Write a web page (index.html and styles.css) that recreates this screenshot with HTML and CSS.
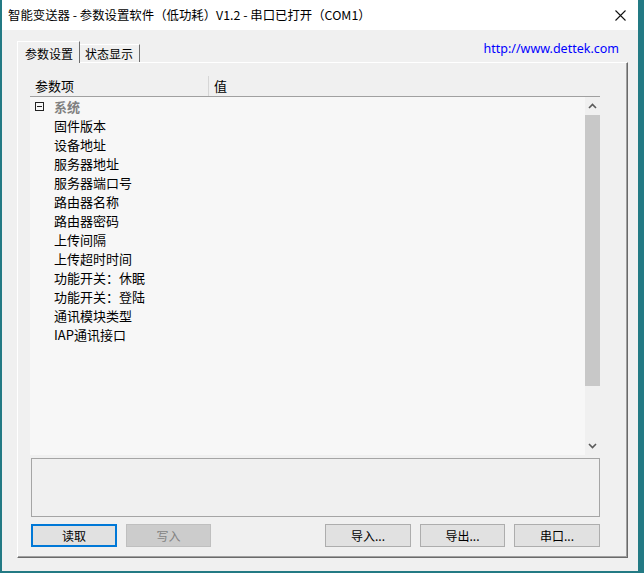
FILE: index.html
```html
<!DOCTYPE html>
<html lang="zh-CN">
<head>
<meta charset="utf-8">
<title>智能变送器</title>
<link rel="stylesheet" href="styles.css">
</head>
<body>
<div class="window">
  <div class="titlebar">
    <span class="title">智能变送器 - 参数设置软件（低功耗）V1.2 - 串口已打开（COM1）</span>
    <svg class="close" width="11" height="11" viewBox="0 0 11 11"><path d="M0.5 0.5 L10.5 10.5 M10.5 0.5 L0.5 10.5" stroke="#111" stroke-width="1.1" fill="none"/></svg>
  </div>
  <div class="client">
    <div class="tabrow">
      <div class="tab active">参数设置</div>
      <div class="tab">状态显示</div>
      <span class="url">http://www.dettek.com</span>
    </div>
    <div class="panel">
      <div class="tree">
        <div class="tree-head">
          <div class="col col-name">参数项</div>
          <div class="col col-val">值</div>
        </div>
        <div class="tree-body">
          <div class="rows">
            <div class="row group"><span class="expander"></span><span class="group-label">系统</span></div>
            <div class="row item">固件版本</div>
            <div class="row item">设备地址</div>
            <div class="row item">服务器地址</div>
            <div class="row item">服务器端口号</div>
            <div class="row item">路由器名称</div>
            <div class="row item">路由器密码</div>
            <div class="row item">上传间隔</div>
            <div class="row item">上传超时时间</div>
            <div class="row item">功能开关：休眠</div>
            <div class="row item">功能开关：登陆</div>
            <div class="row item">通讯模块类型</div>
            <div class="row item">IAP通讯接口</div>
          </div>
          <div class="vscroll">
            <div class="arrow"><svg width="9" height="6" viewBox="0 0 9 6"><path d="M1 5 L4.5 1.5 L8 5" stroke="#5a5a5a" stroke-width="1.6" fill="none"/></svg></div>
            <div class="thumb"></div>
            <div class="track"></div>
            <div class="arrow"><svg width="9" height="6" viewBox="0 0 9 6"><path d="M1 1 L4.5 4.5 L8 1" stroke="#5a5a5a" stroke-width="1.6" fill="none"/></svg></div>
          </div>
        </div>
      </div>
      <div class="log"></div>
      <div class="buttons">
        <button class="btn default">读取</button>
        <button class="btn disabled w85">写入</button>
        <button class="btn push-right">导入...</button>
        <button class="btn w85">导出...</button>
        <button class="btn">串口...</button>
      </div>
    </div>
  </div>
</div>
</body>
</html>
```

FILE: styles.css
```css
html, body {
  margin: 0;
  padding: 0;
}
body {
  width: 644px;
  height: 573px;
  overflow: hidden;
  background: #237a84;
  font-family: "Noto Sans CJK SC", "Noto Sans", sans-serif;
  color: #000;
}
.window {
  margin-left: 2px;
  width: 636px;
  height: 571px;
  background: #f0f0f0;
  display: flex;
  flex-direction: column;
}
.titlebar {
  height: 30px;
  background: #fff;
  display: flex;
  align-items: center;
  padding-left: 6px;
  padding-right: 12px;
}
.title {
  font-size: 12.4px;
  flex: 1;
  white-space: nowrap;
}
.close {
  display: block;
}
.client {
  flex: 1;
  display: flex;
  flex-direction: column;
}
.tabrow {
  height: 32px;
  display: flex;
  align-items: flex-end;
  padding-left: 15px;
  padding-right: 19px;
}
.tab {
  font-size: 12px;
  line-height: 17px;
  height: 18px;
  box-sizing: border-box;
  padding: 0 6px 0 5px;
  border-right: 1px solid #6e6e6e;
  border-top: 1px solid #fff;
  white-space: nowrap;
}
.tab.active {
  padding: 3px 6px 0 7px;
  border-left: 1px solid #fff;
  position: relative;
  z-index: 1;
  margin-bottom: -1px;
  height: 22px;
  background: #f0f0f0;
}
.url {
  margin-left: auto;
  align-self: flex-start;
  margin-top: 11px;
  font-family: "Noto Sans", sans-serif;
  font-size: 12.5px;
  line-height: 16px;
  color: #0000ff;
}
.panel {
  margin-left: 15px;
  width: 611px;
  height: 496px;
  box-sizing: border-box;
  border-top: 1px solid #fff;
  border-left: 1px solid #fff;
  border-right: 1px solid #6a6a6a;
  border-bottom: 1px solid #6a6a6a;
  box-shadow: inset -1px -1px 0 #a0a0a0;
  padding: 13px 27px 9px 12px;
  display: flex;
  flex-direction: column;
}
.tree {
  display: flex;
  flex-direction: column;
}
.tree-head {
  height: 21px;
  box-sizing: border-box;
  border-bottom: 1px solid #a0a0a0;
  display: flex;
  font-size: 13px;
  line-height: 20px;
}
.col-name {
  width: 179px;
  padding-left: 5px;
  box-sizing: border-box;
  border-right: 1px solid #d6d6d6;
}
.col-val {
  padding-left: 5px;
}
.tree-body {
  height: 358px;
  display: flex;
}
.rows {
  flex: 1;
  background: #f7f7f7;
}
.row {
  height: 19px;
  line-height: 19px;
  font-size: 13px;
  white-space: nowrap;
}
.row.item {
  padding-left: 24px;
}
.row.group {
  display: flex;
  align-items: center;
  padding-left: 5px;
}
.expander {
  width: 9px;
  height: 9px;
  box-sizing: border-box;
  border: 1px solid #222;
  position: relative;
  margin-right: 10px;
}
.expander::after {
  content: "";
  position: absolute;
  left: 1px;
  right: 1px;
  top: 3px;
  height: 1px;
  background: #222;
}
.group-label {
  color: #808080;
  font-weight: bold;
}
.vscroll {
  width: 15px;
  display: flex;
  flex-direction: column;
  background: #f0f0f0;
}
.arrow {
  height: 18px;
  display: flex;
  align-items: center;
  justify-content: center;
}
.arrow svg {
  display: block;
}
.thumb {
  height: 271px;
  background: #c8c8c8;
}
.track {
  flex: 1;
}
.log {
  margin-top: 3px;
  margin-left: 1px;
  height: 59px;
  box-sizing: border-box;
  border: 1px solid #a5a5a5;
}
.buttons {
  margin-top: 7px;
  margin-left: 1px;
  display: flex;
  gap: 9px;
}
.btn {
  width: 86px;
  height: 23px;
  box-sizing: border-box;
  background: #e1e1e1;
  border: 1px solid #adadad;
  font-family: "Noto Sans CJK SC", "Noto Sans", sans-serif;
  font-size: 12px;
  color: #000;
  padding: 0;
  line-height: 20px;
}
.btn.w85 {
  width: 85px;
}
.btn.default {
  border: 2px solid #0078d7;
}
.btn.disabled {
  background: #cccccc;
  border-color: #bfbfbf;
  color: #838383;
}
.push-right {
  margin-left: auto;
}
```
